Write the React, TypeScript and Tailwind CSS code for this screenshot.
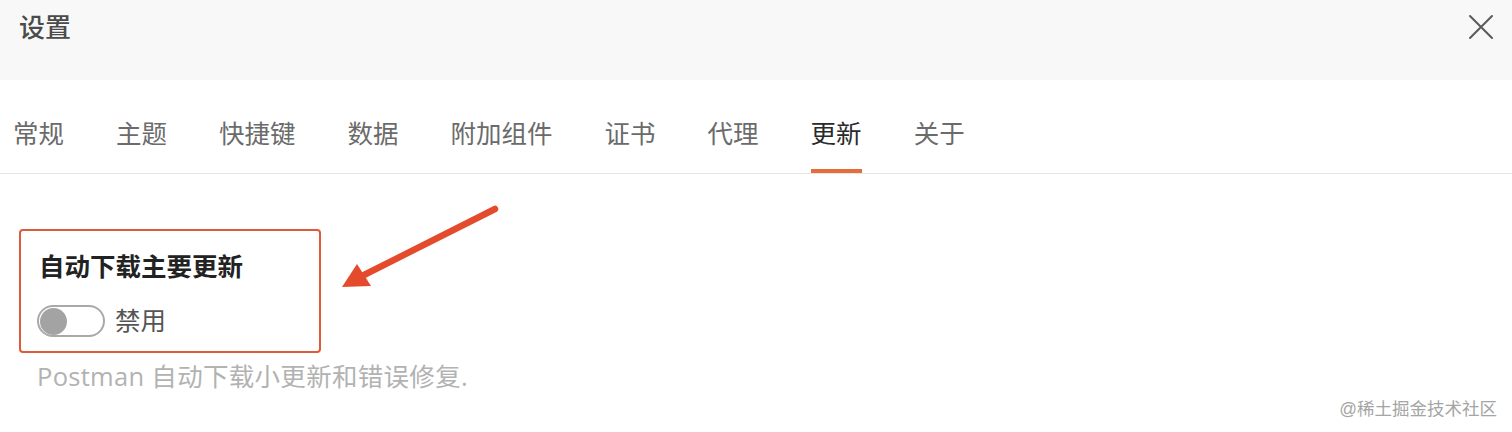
import React from "react";

const tabs = ["常规", "主题", "快捷键", "数据", "附加组件", "证书", "代理", "更新", "关于"];

export default function App() {
  return (
    <div
      className="relative w-[1512px] h-[432px] bg-white overflow-hidden"
      style={{ fontFamily: '"Liberation Sans", "Noto Sans CJK SC", sans-serif' }}
    >
      {/* header */}
      <div className="h-[80px] bg-[#f8f8f8] flex items-start justify-between pl-[19px] pr-[18px] pt-[10px]">
        <div className="text-[26px] leading-[36px] font-medium text-[#4b4b4b]">设置</div>
        <svg width="26" height="26" viewBox="0 0 26 26" className="mt-[4px]">
          <path d="M2 2 L24 24 M24 2 L2 24" stroke="#5a5a5a" strokeWidth="2" strokeLinecap="round" />
        </svg>
      </div>

      {/* tabs */}
      <div className="flex gap-[52px] pl-[13px] pt-[36px] border-b border-[#e6e6e6]">
        {tabs.map((t) => {
          const active = t === "更新";
          return (
            <div
              key={t}
              className={
                "text-[25.5px] leading-[36px] pb-[17px] border-b-4 " +
                (active ? "text-[#2a2a2a] border-[#e56d3c]" : "text-[#6b6b6b] border-transparent")
              }
            >
              {t}
            </div>
          );
        })}
      </div>

      {/* content */}
      <div className="pl-[19px] pt-[55px]">
        <div className="w-[302px] h-[124px] border-2 border-[#dd5a3a] rounded-[4px] pl-[18px] pt-[20px] flex flex-col">
          <div className="text-[25.5px] leading-[32px] font-bold text-[#222]">自动下载主要更新</div>
          <div className="flex items-center gap-[10px] mt-[22px] -ml-[2px]">
            <div className="w-[68px] h-[32px] rounded-full border-2 border-[#a9a9a9] flex items-center pl-[1px]">
              <div className="w-[27px] h-[27px] rounded-full bg-[#a3a3a3]" />
            </div>
            <div className="text-[25.5px] leading-[32px] text-[#555]">禁用</div>
          </div>
        </div>
        <div
          className="mt-[5px] ml-[18px] text-[25.5px] leading-[36px] tracking-[0.3px] text-[#b2b2b2]"
          style={{ fontFamily: '"Open Sans", "Noto Sans CJK SC", sans-serif' }}
        >
          Postman 自动下载小更新和错误修复.
        </div>
      </div>

      {/* annotation arrow */}
      <svg className="absolute left-0 top-0" width="1512" height="432" viewBox="0 0 1512 432">
        <line x1="495" y1="209" x2="362" y2="276" stroke="#e44b2c" strokeWidth="6.5" strokeLinecap="round" />
        <polygon points="342,287 357,264 371,286" fill="#e44b2c" />
      </svg>

      {/* watermark */}
      <div className="absolute right-[15px] bottom-[11px] text-[17.5px] leading-[24px] text-[#a5a5a5]">
        @稀土掘金技术社区
      </div>
    </div>
  );
}
